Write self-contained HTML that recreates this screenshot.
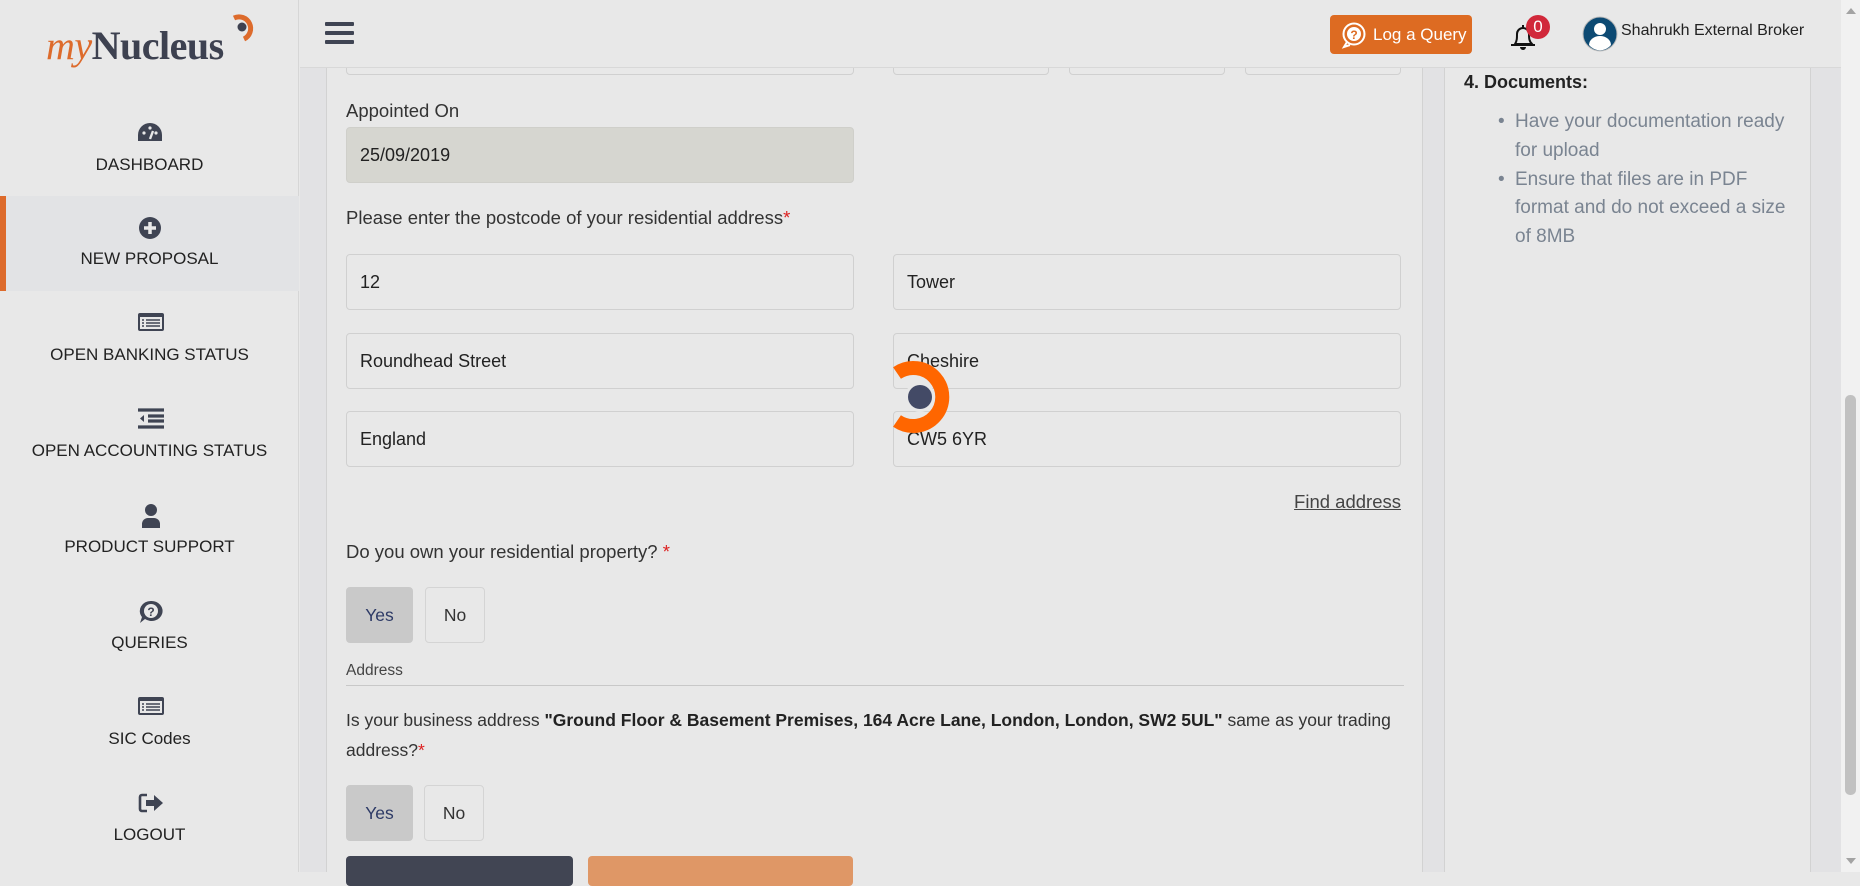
<!DOCTYPE html>
<html><head><meta charset="utf-8"><style>
*{box-sizing:border-box;margin:0;padding:0}
body{width:1860px;height:872px;overflow:hidden;background:#e8e8e8;font-family:"Liberation Sans",Arial,sans-serif;color:#222;position:relative}
.abs{position:absolute}
#side{left:0;top:0;width:299px;height:872px;background:#e8e8e8;border-right:1px solid #d6d6d6}
.nav{position:absolute;left:0;width:299px;height:96px;text-align:center;font-size:17px;color:#222}
.nav svg{position:absolute;left:137px;top:1px}
.nav span{position:absolute;left:0;right:0;top:35px}
.inp{position:absolute;height:56px;border:1px solid #d0d0d0;border-radius:4px;background:#e8e8e8;font-size:18px;padding:17px 13px;color:#222}
.lbl{position:absolute;font-size:18.5px;color:#333}
.btn{position:absolute;height:56px;border:1px solid #d4d4d4;border-radius:4px;font-size:17.5px;text-align:center;line-height:54px;color:#333}
.yes{background:#c9c9c9;color:#2d3a66;border-color:#c9c9c9}
</style></head><body>
<div class="abs" id="side"></div>
<!-- logo -->
<div class="abs" style="left:46px;top:24px;font-family:'Liberation Serif',serif;font-size:40px;font-weight:bold;letter-spacing:-0.5px;line-height:44px"><span style="color:#dd6b2c;font-style:italic;font-weight:normal">my</span><span style="color:#3d4150">Nucleus</span></div>
<svg class="abs" style="left:230px;top:12px" width="28" height="32" viewBox="0 0 28 32"><path d="M4 6 A11 11 0 1 1 14 27" fill="none" stroke="#dd6b2c" stroke-width="5"/><circle cx="12" cy="15" r="4.5" fill="#3d4150"/></svg>
<!-- active -->
<div class="abs" style="left:0;top:196px;width:299px;height:95px;background:#e2e3e5"></div>
<div class="abs" style="left:0;top:196px;width:6px;height:95px;background:#dd6b2c"></div>

<div class="nav" style="top:120px"><svg width="26" height="24" viewBox="0 0 26 24"><path d="M13 2A12 12 0 0 0 1 14v6h24v-6A12 12 0 0 0 13 2z" fill="#3f4453"/><circle cx="7" cy="12" r="1.6" fill="#e8e8e8"/><circle cx="13" cy="7" r="1.6" fill="#e8e8e8"/><circle cx="19" cy="12" r="1.6" fill="#e8e8e8"/><path d="M13 18l3-8" stroke="#e8e8e8" stroke-width="2.4"/></svg><span>DASHBOARD</span></div>
<div class="nav" style="top:214px"><svg width="26" height="26" viewBox="0 0 26 26"><circle cx="13" cy="13" r="11" fill="#3f4453"/><path d="M13 7v12M7 13h12" stroke="#e8e8e8" stroke-width="3.5"/></svg><span>NEW PROPOSAL</span></div>
<div class="nav" style="top:310px"><svg width="28" height="22" viewBox="0 0 28 22"><rect x="1" y="2" width="26" height="18" rx="2" fill="#3f4453"/><rect x="3" y="6" width="22" height="12" fill="#e8e8e8"/><path d="M5 9h2M9 9h14M5 12h2M9 12h14M5 15h2M9 15h14" stroke="#3f4453" stroke-width="1.6"/></svg><span>OPEN BANKING STATUS</span></div>
<div class="nav" style="top:406px"><svg width="28" height="22" viewBox="0 0 28 22"><path d="M1 3h26M11 9h16M11 14h16M1 20h26" stroke="#3f4453" stroke-width="3.2"/><path d="M7 8v7l-4-3.5z" fill="#3f4453"/></svg><span>OPEN ACCOUNTING STATUS</span></div>
<div class="nav" style="top:502px"><svg width="28" height="26" viewBox="0 0 28 26"><circle cx="14" cy="7" r="6" fill="#3f4453"/><path d="M5 25v-4a6 6 0 0 1 6-6h6a6 6 0 0 1 6 6v4z" fill="#3f4453"/></svg><span>PRODUCT SUPPORT</span></div>
<div class="nav" style="top:598px"><svg width="28" height="26" viewBox="0 0 28 26"><path d="M14 2a11 10 0 1 1-6 18l-5 4 2-6A11 10 0 0 1 14 2z" fill="#3f4453"/><circle cx="14" cy="12" r="7" fill="#e8e8e8"/><text x="14" y="17" font-size="12" font-weight="bold" text-anchor="middle" fill="#3f4453" font-family="Liberation Sans">?</text></svg><span>QUERIES</span></div>
<div class="nav" style="top:694px"><svg width="28" height="22" viewBox="0 0 28 22"><rect x="1" y="2" width="26" height="18" rx="2" fill="#3f4453"/><rect x="3" y="6" width="22" height="12" fill="#e8e8e8"/><path d="M5 9h2M9 9h14M5 12h2M9 12h14M5 15h2M9 15h14" stroke="#3f4453" stroke-width="1.6"/></svg><span>SIC Codes</span></div>
<div class="nav" style="top:790px"><svg width="28" height="24" viewBox="0 0 28 24"><path d="M10 4H5a2 2 0 0 0-2 2v12a2 2 0 0 0 2 2h5" fill="none" stroke="#3f4453" stroke-width="2.6"/><path d="M9 9h8V4l9 8-9 8v-5H9z" fill="#3f4453"/></svg><span>LOGOUT</span></div>

<!-- main card -->
<div class="abs" style="left:300px;top:0;width:26px;height:872px;background:#e2e2e4"></div>
<div class="abs" style="left:326px;top:0;width:1097px;height:872px;border-left:1px solid #d2d2d2;border-right:1px solid #d2d2d2"></div>
<div class="abs" style="left:1423px;top:0;width:21px;height:872px;background:#e2e2e4"></div>
<div class="abs" style="left:1444px;top:0;width:367px;height:872px;border-left:1px solid #d2d2d2;border-right:1px solid #d2d2d2"></div>
<div class="abs" style="left:1811px;top:0;width:30px;height:872px;background:#e2e2e4"></div>

<div class="inp" style="left:346px;top:19px;width:508px"></div>
<div class="inp" style="left:893px;top:19px;width:156px"></div>
<div class="inp" style="left:1069px;top:19px;width:156px"></div>
<div class="inp" style="left:1245px;top:19px;width:156px"></div>

<!-- topbar -->
<div class="abs" style="left:300px;top:0;width:1541px;height:68px;background:#e8e8e8;border-bottom:1px solid #d8d8d8"></div>
<div class="abs" style="left:325px;top:22px;width:29px;height:4px;background:#3f4453;border-radius:1px;box-shadow:0 9px 0 #3f4453,0 18px 0 #3f4453"></div>
<div class="abs" style="left:1330px;top:15px;width:142px;height:39px;background:#dd6b22;border-radius:4px;color:#fff;font-size:17px;line-height:39px;padding-left:43px">Log a Query</div>
<svg class="abs" style="left:1341px;top:22px" width="26" height="27" viewBox="0 0 26 27"><circle cx="13" cy="12" r="10.5" fill="none" stroke="#fff" stroke-width="2"/><path d="M6 20l-3 5 6-2" fill="none" stroke="#fff" stroke-width="2"/><circle cx="13" cy="12" r="7" fill="#fff"/><text x="13" y="17" font-size="12" font-weight="bold" text-anchor="middle" fill="#dd6b22" font-family="Liberation Sans">?</text></svg>
<svg class="abs" style="left:1508px;top:22px" width="30" height="30" viewBox="0 0 30 30"><path d="M7 22c2-3 2-6 2-10a6 6 0 0 1 12 0c0 4 0 7 3 10z" fill="none" stroke="#111" stroke-width="2"/><path d="M3 23h24" stroke="#111" stroke-width="2"/><path d="M12 25a3 3 0 0 0 6 0" fill="#111"/><path d="M15 3v3" stroke="#111" stroke-width="2"/></svg>
<div class="abs" style="left:1526px;top:15px;width:24px;height:24px;border-radius:12px;background:#d1283a;color:#fff;font-size:17px;text-align:center;line-height:24px">0</div>
<svg class="abs" style="left:1582px;top:15px" width="36" height="38" viewBox="0 0 36 38"><circle cx="18" cy="19" r="17" fill="#0d4a73" stroke="#bbb" stroke-width="1"/><circle cx="18" cy="14" r="6" fill="#fff"/><path d="M7 30a11 9 0 0 1 22 0a14 14 0 0 1-22 0z" fill="#fff"/></svg>
<div class="abs" style="left:1621px;top:22px;font-size:16px;color:#222">Shahrukh External Broker</div>

<div class="lbl" style="left:346px;top:100px">Appointed On</div>
<div class="inp" style="left:346px;top:127px;width:508px;background:#d6d6d0;border-color:#cfcfca">25/09/2019</div>
<div class="lbl" style="left:346px;top:207px">Please enter the postcode of your residential address<span style="color:#d22">*</span></div>
<div class="inp" style="left:346px;top:254px;width:508px">12</div>
<div class="inp" style="left:893px;top:254px;width:508px">Tower</div>
<div class="inp" style="left:346px;top:333px;width:508px">Roundhead Street</div>
<div class="inp" style="left:893px;top:333px;width:508px">Cheshire</div>
<div class="inp" style="left:346px;top:411px;width:508px">England</div>
<div class="inp" style="left:893px;top:411px;width:508px">CW5 6YR</div>
<div class="lbl" style="right:459px;top:491px;text-decoration:underline;color:#444">Find address</div>
<div class="lbl" style="left:346px;top:541px">Do you own your residential property? <span style="color:#d22">*</span></div>
<div class="btn yes" style="left:346px;top:587px;width:67px">Yes</div>
<div class="btn" style="left:425px;top:587px;width:60px">No</div>
<div class="abs" style="left:346px;top:662px;font-size:15.5px;color:#444">Address</div>
<div class="abs" style="left:346px;top:685px;width:1058px;height:1px;background:#c8c8c8"></div>
<div class="lbl" style="left:346px;top:705px;line-height:30px;width:1060px;font-size:17.5px">Is your business address <b style="color:#222">"Ground Floor &amp; Basement Premises, 164 Acre Lane, London, London, SW2 5UL"</b> same as your trading address?<span style="color:#d22">*</span></div>
<div class="btn yes" style="left:346px;top:785px;width:67px">Yes</div>
<div class="btn" style="left:424px;top:785px;width:60px">No</div>
<div class="abs" style="left:346px;top:856px;width:227px;height:30px;background:#414553;border-radius:4px"></div>
<div class="abs" style="left:588px;top:856px;width:265px;height:30px;background:#df9766;border-radius:4px"></div>

<!-- spinner -->
<svg class="abs" style="left:880px;top:356px" width="90" height="82" viewBox="0 0 90 82"><path d="M17 17 A29 29 0 1 1 17 65" fill="none" stroke="#ff6600" stroke-width="14"/><circle cx="40" cy="41" r="15" fill="#e8e8e8"/><circle cx="40" cy="41" r="12" fill="#434a66"/></svg>

<!-- right panel -->
<div class="abs" style="left:1464px;top:72px;font-size:18px;font-weight:bold;color:#222">4. Documents:</div>
<ul class="abs" style="left:1498px;top:108px;width:290px;font-size:19px;line-height:28.8px;color:#7a8491;list-style:none">
<li style="position:relative;padding-left:17px"><span style="position:absolute;left:0">•</span>Have your documentation ready for upload</li>
<li style="position:relative;padding-left:17px"><span style="position:absolute;left:0">•</span>Ensure that files are in PDF format and do not exceed a size of 8MB</li>
</ul>

<!-- scrollbar -->
<div class="abs" style="left:1841px;top:0;width:19px;height:872px;background:#f1f1f1"></div>
<div class="abs" style="left:1846px;top:8px;width:0;height:0;border-left:5px solid transparent;border-right:5px solid transparent;border-bottom:6px solid #a3a3a3"></div>
<div class="abs" style="left:1846px;top:858px;width:0;height:0;border-left:5px solid transparent;border-right:5px solid transparent;border-top:6px solid #a3a3a3"></div>
<div class="abs" style="left:1845px;top:395px;width:11px;height:400px;background:#c1c1c1;border-radius:5px"></div>
</body></html>
